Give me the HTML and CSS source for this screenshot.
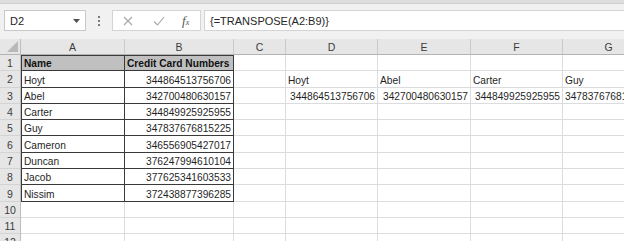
FILE: index.html
```html
<!DOCTYPE html>
<html>
<head>
<meta charset="utf-8">
<link rel="stylesheet" href="styles.css">
</head>
<body>
<div class="app">
  <div class="topstrip"></div>
  <div class="toolbar">
    <div class="namebox">
      <span class="nb-text">D2</span>
      <svg class="nb-arrow" width="7" height="4" viewBox="0 0 7 4"><path d="M0 0H7L3.5 4Z" fill="#505050"/></svg>
    </div>
    <div class="dots"><i></i><i></i><i></i></div>
    <div class="buttons">
      <svg class="btn-x" width="10" height="10" viewBox="0 0 10 10"><path d="M1 1L9 9M9 1L1 9" stroke="#a6a6a6" stroke-width="1.1" fill="none"/></svg>
      <svg class="btn-check" width="12" height="10" viewBox="0 0 12 10"><path d="M1 5.5L4.5 9L11 1" stroke="#a6a6a6" stroke-width="1.1" fill="none"/></svg>
      <span class="fx"><span class="fx-f">f</span><span class="fx-x">x</span></span>
    </div>
    <div class="formula">{=TRANSPOSE(A2:B9)}</div>
  </div>
  <div class="sheet">
    <div class="corner"><svg width="11" height="11" viewBox="0 0 11 11"><path d="M11 0V11H0Z" fill="#b8b8b8"/></svg></div>
    <div class="ch">A</div><div class="ch">B</div><div class="ch">C</div><div class="ch">D</div><div class="ch">E</div><div class="ch">F</div><div class="ch">G</div>

    <div class="rh t">1</div><div class="c t ta tt hd">Name</div><div class="c t tt hd">Credit Card Numbers</div><div class="c"></div><div class="c"></div><div class="c"></div><div class="c"></div><div class="c"></div>
    <div class="rh t">2</div><div class="c t ta">Hoyt</div><div class="c t num">344864513756706</div><div class="c"></div><div class="c">Hoyt</div><div class="c">Abel</div><div class="c">Carter</div><div class="c">Guy</div>
    <div class="rh t">3</div><div class="c t ta">Abel</div><div class="c t num">342700480630157</div><div class="c"></div><div class="c num">344864513756706</div><div class="c num">342700480630157</div><div class="c num">344849925925955</div><div class="c over">347837676815225</div>
    <div class="rh t">4</div><div class="c t ta">Carter</div><div class="c t num">344849925925955</div><div class="c"></div><div class="c"></div><div class="c"></div><div class="c"></div><div class="c"></div>
    <div class="rh t">5</div><div class="c t ta">Guy</div><div class="c t num">347837676815225</div><div class="c"></div><div class="c"></div><div class="c"></div><div class="c"></div><div class="c"></div>
    <div class="rh t">6</div><div class="c t ta">Cameron</div><div class="c t num">346556905427017</div><div class="c"></div><div class="c"></div><div class="c"></div><div class="c"></div><div class="c"></div>
    <div class="rh t">7</div><div class="c t ta">Duncan</div><div class="c t num">376247994610104</div><div class="c"></div><div class="c"></div><div class="c"></div><div class="c"></div><div class="c"></div>
    <div class="rh t">8</div><div class="c t ta">Jacob</div><div class="c t num">377625341603533</div><div class="c"></div><div class="c"></div><div class="c"></div><div class="c"></div><div class="c"></div>
    <div class="rh t">9</div><div class="c t ta">Nissim</div><div class="c t num">372438877396285</div><div class="c"></div><div class="c"></div><div class="c"></div><div class="c"></div><div class="c"></div>
    <div class="rh">10</div><div class="c"></div><div class="c"></div><div class="c"></div><div class="c"></div><div class="c"></div><div class="c"></div><div class="c"></div>
    <div class="rh">11</div><div class="c"></div><div class="c"></div><div class="c"></div><div class="c"></div><div class="c"></div><div class="c"></div><div class="c"></div>
    <div class="rh">12</div><div class="c"></div><div class="c"></div><div class="c"></div><div class="c"></div><div class="c"></div><div class="c"></div><div class="c"></div>
  </div>
</div>
</body>
</html>
```

FILE: styles.css
```css
html, body {
  margin: 0;
  padding: 0;
  background: #ffffff;
}
body {
  width: 624px;
  height: 241px;
  overflow: hidden;
  font-family: "Liberation Sans", Arial, sans-serif;
  font-size: 10.2px;
  color: #1f1f1f;
}
.app {
  display: flex;
  flex-direction: column;
  width: 624px;
}
.topstrip {
  height: 3px;
  background: #dedede;
  border-bottom: 1px solid #cfcfcf;
}
.toolbar {
  height: 35px;
  background: #f1f1f1;
  display: flex;
  align-items: flex-start;
  padding-top: 6px;
  box-sizing: border-box;
}
.namebox {
  margin-left: 4px;
  width: 82px;
  height: 21px;
  box-sizing: border-box;
  background: #fff;
  border: 1px solid #c9c9c9;
  display: flex;
  align-items: center;
  justify-content: space-between;
  padding: 0 5px 0 5px;
  font-size: 11px;
  color: #262626;
}
.nb-arrow {
  margin-top: 1px;
}
.dots {
  width: 26px;
  height: 21px;
  display: flex;
  flex-direction: column;
  align-items: center;
  justify-content: center;
  gap: 2px;
}
.dots i {
  display: block;
  width: 2px;
  height: 2px;
  background: #7a7a7a;
}
.buttons {
  width: 89px;
  height: 21px;
  box-sizing: border-box;
  background: #fff;
  border: 1px solid #d4d4d4;
  display: flex;
  align-items: center;
  padding-left: 10px;
}
.btn-x {
  margin-right: 20px;
}
.btn-check {
  margin-right: 17px;
}
.fx {
  font-family: "Liberation Serif", "Times New Roman", serif;
  font-style: italic;
  color: #555;
  display: flex;
  align-items: baseline;
}
.fx-f {
  font-size: 13px;
}
.fx-x {
  font-size: 8px;
}
.formula {
  margin-left: 3px;
  flex: 1;
  height: 21px;
  box-sizing: border-box;
  background: #fff;
  border: 1px solid #d4d4d4;
  border-right: none;
  display: flex;
  align-items: center;
  padding-left: 5px;
  font-size: 11px;
  color: #262626;
}
.sheet {
  display: grid;
  grid-template-columns: 21px 104px 109px 52px 92px 93px 92px 92px;
  grid-template-rows: 16px;
  grid-auto-rows: 16.3px;
  width: 655px;
}
.corner {
  background: #e6e6e6;
  border-right: 1px solid #bdbdbd;
  border-bottom: 1px solid #b3b3b3;
  box-sizing: border-box;
  display: flex;
  align-items: flex-end;
  justify-content: flex-end;
  padding: 0 2px 2px 0;
}
.ch {
  background: #e6e6e6;
  border-right: 1px solid #cacaca;
  border-bottom: 1px solid #b3b3b3;
  box-sizing: border-box;
  display: flex;
  align-items: center;
  justify-content: center;
  color: #3c3c3c;
  font-size: 10.5px;
}
.rh {
  background: #e6e6e6;
  border-right: 1px solid #bdbdbd;
  border-bottom: 1px solid #d3d3d3;
  box-sizing: border-box;
  display: flex;
  align-items: center;
  justify-content: center;
  color: #3c3c3c;
  font-size: 10.5px;
  padding-top: 1px;
}
.c {
  border-right: 1px solid #dadcdd;
  border-bottom: 1px solid #dadcdd;
  box-sizing: border-box;
  display: flex;
  align-items: flex-end;
  padding: 0 2px 1px 2px;
  white-space: nowrap;
  min-width: 0;
}
.c.t {
  border-right-color: #3a3a3a;
  border-bottom-color: #3a3a3a;
}
.c.ta {
  box-shadow: inset 1px 0 0 #3a3a3a;
  padding-left: 3px;
}
.c.tt {
  box-shadow: inset 0 1px 0 #3a3a3a;
}
.c.ta.tt {
  box-shadow: inset 1px 1px 0 #3a3a3a;
}
.c.hd {
  background: #c0c0c0;
  font-weight: bold;
  color: #111;
}
.num {
  justify-content: flex-end;
}
.over {
  overflow: visible;
}
```
